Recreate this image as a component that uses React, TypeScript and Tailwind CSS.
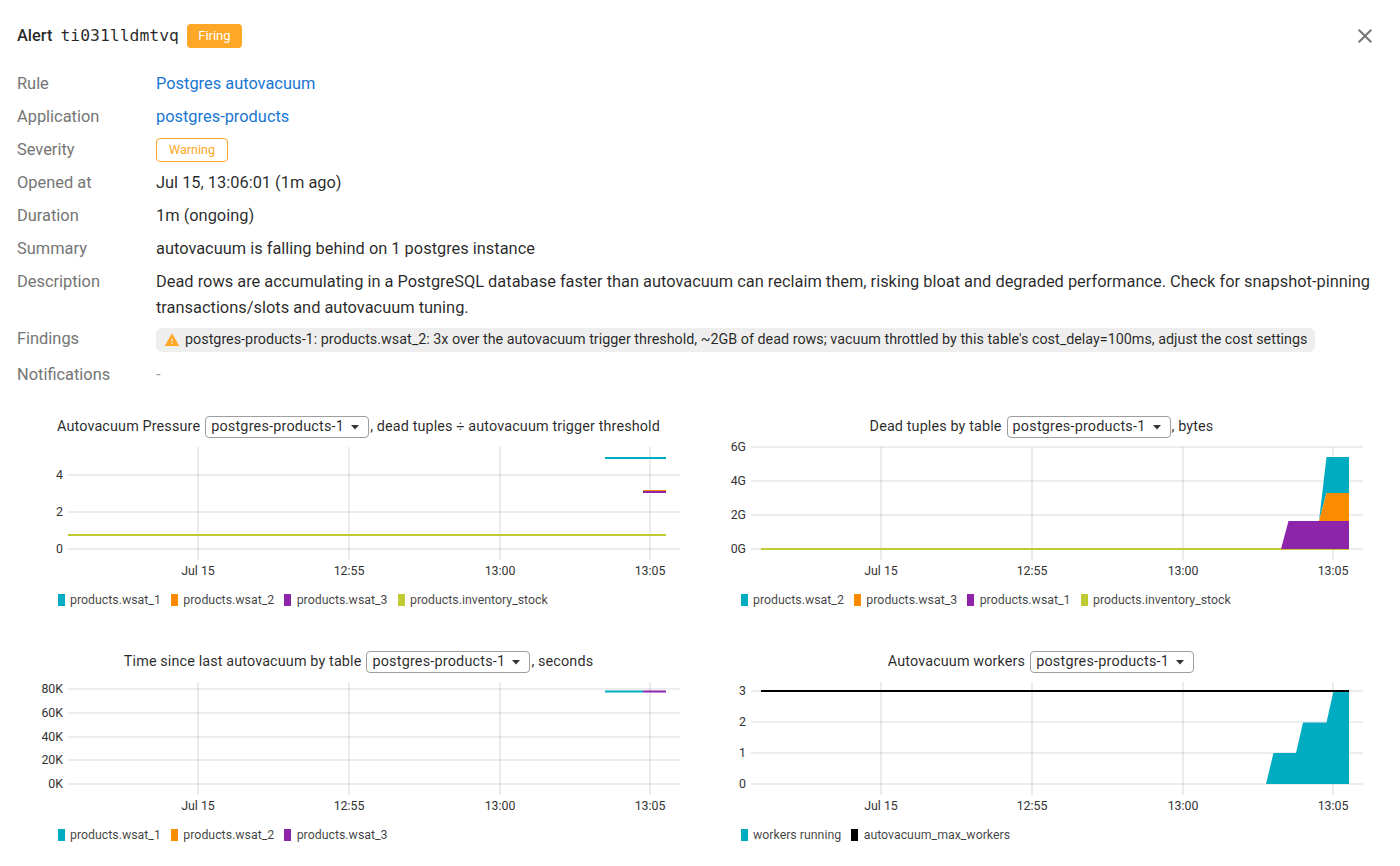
const CYAN = '#00acc1';
const ORANGE = '#fb8c00';
const PURPLE = '#8e24aa';
const OLIVE = '#c0ca33';

interface Mark {
    kind: 'line' | 'area';
    color: string;
    points: string;
}

interface ChartProps {
    title: string;
    suffix?: string;
    left: number; // page x of the chart box, the drawing uses page coordinates
    top: number; // page y of the svg
    yTicks: [string, number][];
    vTop: number;
    vBottom: number;
    labelY: number;
    marks: Mark[];
    legend: [string, string][];
}

function Chart({ title, suffix, left, top, yTicks, vTop, vBottom, labelY, marks, legend }: ChartProps) {
    const gridStart = left === 17 ? 68 : 751;
    const gridEnd = left === 17 ? 680 : 1363;
    const labelEnd = left === 17 ? 63 : 746;
    const xTicks: [string, number][] = left === 17
        ? [['Jul 15', 198], ['12:55', 349], ['13:00', 500], ['13:05', 650]]
        : [['Jul 15', 881], ['12:55', 1032], ['13:00', 1183], ['13:05', 1333]];

    return (
        <div className="h-[195px]">
            <div className="flex h-[22px] items-center justify-center pl-5 text-[14.4px] tracking-[0.12px] text-black/85">
                <span>{title}</span>
                <span className="ml-[5px] mr-px flex h-[22px] w-[164px] items-center justify-between rounded border border-[#9e9e9e] pl-[5px] pr-2 tracking-[0.2px]">
                    postgres-products-1
                    <svg width="10" height="5" viewBox="0 0 10 5"><path d="M1 0h8L5 4.5z" fill="#333" /></svg>
                </span>
                {suffix && <span>{suffix}</span>}
            </div>
            <svg className="mt-[3px] block h-[149px] w-[663px]" viewBox={`${left} ${top} 663 149`}>
                {yTicks.map(([label, y]) => (
                    <g key={label}>
                        <line x1={gridStart} x2={gridEnd} y1={y} y2={y} stroke="#000" strokeOpacity="0.07" strokeWidth="2" />
                        <text x={labelEnd} y={y + 3.5} textAnchor="end" fontSize="12.35" fill="#333" fontFamily="Roboto">{label}</text>
                    </g>
                ))}
                {xTicks.map(([label, x]) => (
                    <g key={label}>
                        <line x1={x} x2={x} y1={vTop} y2={vBottom} stroke="#000" strokeOpacity="0.08" strokeWidth="2" />
                        <text x={x} y={labelY} textAnchor="middle" fontSize="12.35" fill="#333" fontFamily="Roboto">{label}</text>
                    </g>
                ))}
                {marks.map((m, i) =>
                    m.kind === 'area'
                        ? <polygon key={i} points={m.points} fill={m.color} />
                        : <polyline key={i} points={m.points} fill="none" stroke={m.color} strokeWidth="2" />
                )}
            </svg>
            <div className="flex h-5 items-center pl-[40.5px] text-[12.35px] text-black/75">
                {legend.map(([name, color]) => (
                    <div key={name} className="mr-[10px] flex items-center">
                        <span className="mr-[5.5px] h-3 w-[7px]" style={{ backgroundColor: color }} />
                        {name}
                    </div>
                ))}
            </div>
        </div>
    );
}

function Row({ label, children }: { label: string; children: React.ReactNode }) {
    return (
        <div className="flex h-[33px] items-center">
            <div className="w-[139px] shrink-0 text-[#757575]">{label}</div>
            <div>{children}</div>
        </div>
    );
}

export default function App() {
    return (
        <div className="min-h-[866px] bg-white pl-[17px] pr-[23px] pt-6 text-[16.4px] text-black/85 [font-family:Roboto,sans-serif]">
            {/* Header */}
            <div className="flex h-6 items-center justify-between">
                <div className="flex items-center">
                    <span className="font-medium">Alert</span>
                    <span className="ml-2 [font-family:'DejaVu_Sans_Mono',monospace]">ti031lldmtvq</span>
                    <span className="ml-2 flex h-6 w-[55px] items-center justify-center rounded bg-[#ffa726] text-[13px] text-white">Firing</span>
                </div>
                <svg width="24" height="24" viewBox="0 0 24 24" fill="#757575">
                    <path d="M19 6.41L17.59 5 12 10.59 6.41 5 5 6.41 10.59 12 5 17.59 6.41 19 12 13.41 17.59 19 19 17.59 13.41 12z" />
                </svg>
            </div>

            {/* Details */}
            <div className="mt-[19.5px]">
                <Row label="Rule"><a className="text-[#1976d2]">Postgres autovacuum</a></Row>
                <Row label="Application"><a className="text-[#1976d2]">postgres-products</a></Row>
                <Row label="Severity">
                    <span className="flex h-6 w-[72px] items-center justify-center rounded border border-[#ffa726] text-[12.6px] text-[#ffa726]">Warning</span>
                </Row>
                <Row label="Opened at">Jul 15, 13:06:01 (1m ago)</Row>
                <Row label="Duration">1m (ongoing)</Row>
                <Row label="Summary">autovacuum is falling behind on 1 postgres instance</Row>
                <div className="flex py-[3.5px] leading-[26px]">
                    <div className="w-[139px] shrink-0 text-[#757575]">Description</div>
                    <div>Dead rows are accumulating in a PostgreSQL database faster than autovacuum can reclaim them, risking bloat and degraded performance. Check for snapshot-pinning transactions/slots and autovacuum tuning.</div>
                </div>
                <div className="mb-1 flex h-[30px] items-center">
                    <div className="w-[139px] shrink-0 text-[#757575]">Findings</div>
                    <div className="flex h-6 items-center rounded-md bg-[#eeeeee] pl-2 pr-2 text-[14.35px]">
                        <svg className="mr-[5px]" width="16" height="16" viewBox="0 0 24 24" fill="#ffa726">
                            <path d="M1 21h22L12 2 1 21zm12-3h-2v-2h2v2zm0-4h-2v-4h2v4z" />
                        </svg>
                        postgres-products-1: products.wsat_2: 3x over the autovacuum trigger threshold, ~2GB of dead rows; vacuum throttled by this table's cost_delay=100ms, adjust the cost settings
                    </div>
                </div>
                <Row label="Notifications"><span className="text-[#9e9e9e]">-</span></Row>
            </div>

            {/* Charts */}
            <div className="mt-[24.5px] grid grid-cols-[663px_663px] gap-x-5 gap-y-10">
                <Chart
                    title="Autovacuum Pressure"
                    suffix=", dead tuples ÷ autovacuum trigger threshold"
                    left={17}
                    top={441}
                    yTicks={[['4', 475], ['2', 512], ['0', 549]]}
                    vTop={447}
                    vBottom={560}
                    labelY={575}
                    marks={[
                        { kind: 'line', color: OLIVE, points: '68,535 666,535' },
                        { kind: 'line', color: CYAN, points: '605,458 666,458' },
                        { kind: 'line', color: ORANGE, points: '643,491 666,491' },
                        { kind: 'line', color: PURPLE, points: '643,492 666,492' },
                    ]}
                    legend={[['products.wsat_1', CYAN], ['products.wsat_2', ORANGE], ['products.wsat_3', PURPLE], ['products.inventory_stock', OLIVE]]}
                />
                <Chart
                    title="Dead tuples by table"
                    suffix=", bytes"
                    left={700}
                    top={441}
                    yTicks={[['6G', 447], ['4G', 481], ['2G', 515], ['0G', 549]]}
                    vTop={447}
                    vBottom={560}
                    labelY={575}
                    marks={[
                        { kind: 'line', color: OLIVE, points: '761,549 1349,549' },
                        { kind: 'area', color: CYAN, points: '1319,521 1326.5,457 1349,457 1349,493 1326.5,493' },
                        { kind: 'area', color: ORANGE, points: '1319,521 1326.5,493 1349,493 1349,521' },
                        { kind: 'area', color: PURPLE, points: '1281,549 1288.5,521 1349,521 1349,549' },
                    ]}
                    legend={[['products.wsat_2', CYAN], ['products.wsat_3', ORANGE], ['products.wsat_1', PURPLE], ['products.inventory_stock', OLIVE]]}
                />
                <Chart
                    title="Time since last autovacuum by table"
                    suffix=", seconds"
                    left={17}
                    top={676}
                    yTicks={[['80K', 689], ['60K', 713], ['40K', 737], ['20K', 760], ['0K', 784]]}
                    vTop={682}
                    vBottom={795}
                    labelY={810}
                    marks={[
                        { kind: 'line', color: CYAN, points: '605,691.5 643,691.5' },
                        { kind: 'line', color: PURPLE, points: '643,691.5 666,691.5' },
                    ]}
                    legend={[['products.wsat_1', CYAN], ['products.wsat_2', ORANGE], ['products.wsat_3', PURPLE]]}
                />
                <Chart
                    title="Autovacuum workers"
                    left={700}
                    top={676}
                    yTicks={[['3', 691], ['2', 722], ['1', 753], ['0', 784]]}
                    vTop={682}
                    vBottom={795}
                    labelY={810}
                    marks={[
                        { kind: 'area', color: CYAN, points: '1266,784 1273.5,753 1296,753 1303,722.5 1326.5,722.5 1333.5,691 1349,691 1349,784' },
                        { kind: 'line', color: '#000', points: '761,691 1349,691' },
                    ]}
                    legend={[['workers running', CYAN], ['autovacuum_max_workers', '#000']]}
                />
            </div>
        </div>
    );
}
